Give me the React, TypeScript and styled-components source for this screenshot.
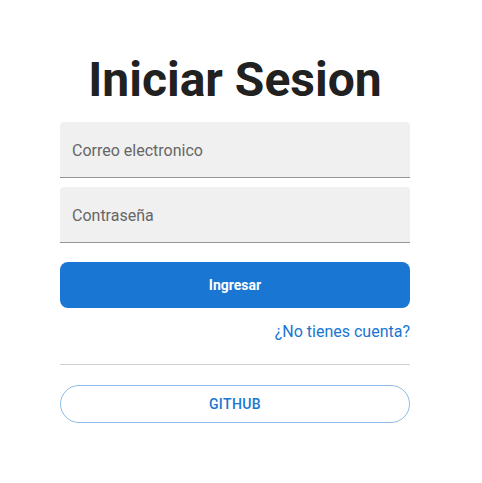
import React from 'react';
import styled, { createGlobalStyle } from 'styled-components';

const GlobalStyle = createGlobalStyle`
  body {
    margin: 0;
    background: #ffffff;
    font-family: Roboto, "Liberation Sans", sans-serif;
  }
`;

const Page = styled.div`
  padding: 51px 0 0 60px;
`;

const Form = styled.form`
  width: 350px;
  display: flex;
  flex-direction: column;
`;

const Title = styled.h1`
  margin: 0 0 13px;
  font-size: 48px;
  line-height: 57.6px;
  font-weight: 700;
  color: #212121;
  text-align: center;
`;

const Field = styled.div`
  height: 56px;
  box-sizing: border-box;
  background: #f0f0f0;
  border-radius: 4px 4px 0 0;
  border-bottom: 1px solid #949494;
  display: flex;
  align-items: center;
  padding: 2px 12px 0;
  margin-bottom: ${(p: { $gap: number }) => p.$gap}px;
`;

const Input = styled.input`
  border: 0;
  background: transparent;
  width: 100%;
  font-family: Roboto, "Liberation Sans", sans-serif;
  font-size: 16px;
  padding: 0;
  color: #212121;

  &::placeholder {
    color: #666666;
    opacity: 1;
  }

  &:focus {
    outline: none;
  }
`;

const SubmitButton = styled.button`
  height: 46px;
  border: 0;
  border-radius: 8px;
  background: #1976d2;
  color: #ffffff;
  font-family: Roboto, "Liberation Sans", sans-serif;
  font-size: 14px;
  font-weight: 700;
  cursor: pointer;
`;

const LinkRow = styled.div`
  display: flex;
  justify-content: flex-end;
  margin-top: 12px;
`;

const SignupLink = styled.a`
  font-size: 16px;
  line-height: 24px;
  color: #1976d2;
  text-decoration: none;
`;

const Divider = styled.hr`
  margin: 20px 0 20px;
  border: 0;
  border-top: 1px solid #cfcfcf;
`;

const GithubButton = styled.button`
  height: 38px;
  border: 1px solid #8ebbe9;
  border-radius: 20px;
  background: #ffffff;
  color: #1976d2;
  font-family: Roboto, "Liberation Sans", sans-serif;
  font-size: 14px;
  font-weight: 500;
  letter-spacing: 0.4px;
  cursor: pointer;
`;

const App = () => {
  return (
    <Page>
      <GlobalStyle />
      <Form onSubmit={(e) => e.preventDefault()}>
        <Title>Iniciar Sesion</Title>
        <Field $gap={9}>
          <Input type="email" placeholder="Correo electronico" />
        </Field>
        <Field $gap={19}>
          <Input type="password" placeholder="Contraseña" />
        </Field>
        <SubmitButton type="submit">Ingresar</SubmitButton>
        <LinkRow>
          <SignupLink href="#">¿No tienes cuenta?</SignupLink>
        </LinkRow>
        <Divider />
        <GithubButton type="button">GITHUB</GithubButton>
      </Form>
    </Page>
  );
};

export default App;
